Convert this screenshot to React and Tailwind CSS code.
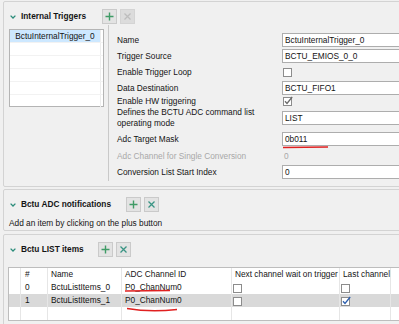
import React from "react";

function Plus() {
  return (
    <svg width="9" height="9" viewBox="0 0 9 9">
      <path d="M4.5 0.5V8.5M0.5 4.5H8.5" stroke="#3f9b66" strokeWidth="1.4" fill="none" />
    </svg>
  );
}
function XIcon({ color }) {
  return (
    <svg width="7" height="7" viewBox="0 0 7 7">
      <path d="M0.5 0.5L6.5 6.5M6.5 0.5L0.5 6.5" stroke={color} strokeWidth="1.3" fill="none" />
    </svg>
  );
}
function Chevron() {
  return (
    <svg width="6" height="4" viewBox="0 0 6 4" className="shrink-0">
      <path d="M0.6 0.6L3 3L5.4 0.6" stroke="#2b8c7a" strokeWidth="1.3" fill="none" />
    </svg>
  );
}
function Buttons({ xDisabled }) {
  return (
    <div className="flex gap-[3px]">
      <span className="w-[15px] h-[15px] flex items-center justify-center bg-[#e3e3e3] border border-[#cacaca]">
        <Plus />
      </span>
      {xDisabled ? (
        <span className="w-[15px] h-[15px] flex items-center justify-center bg-[#dcdcdc] border border-[#d4d4d4]">
          <XIcon color="#bdbdbd" />
        </span>
      ) : (
        <span className="w-[15px] h-[15px] flex items-center justify-center bg-[#e3e3e3] border border-[#cacaca]">
          <XIcon color="#3a9484" />
        </span>
      )}
    </div>
  );
}
function Header({ title, w, xDisabled }) {
  return (
    <div className="flex items-center h-[15px]">
      <span className="ml-[6px] mr-[5px] flex items-center">
        <Chevron />
      </span>
      <span className={`font-bold text-[#141414] whitespace-nowrap ${w}`}>{title}</span>
      <Buttons xDisabled={xDisabled} />
    </div>
  );
}
function Box({ checked, tick = "#2d5fae" }) {
  return (
    <svg width="10" height="10" viewBox="0 0 10 10" className="shrink-0">
      <rect x="0.5" y="1.5" width="8" height="8" fill="#fff" stroke="#8c8c8c" />
      {checked && <path d="M2 5.2L4 7.4L9.2 1" stroke={tick} strokeWidth="1.3" fill="none" />}
    </svg>
  );
}
function Input({ children }) {
  return (
    <div className="h-[14px] w-[140px] bg-white border border-[#adadad] flex items-center pl-[2px] text-[#141414] whitespace-nowrap">
      {children}
    </div>
  );
}
function Row({ h, label, gray, children }) {
  return (
    <div className={`flex items-center ${h}`}>
      <div className={`w-[165px] shrink-0 whitespace-nowrap ${gray ? "text-[#a8a8a8]" : "text-[#141414]"}`}>{label}</div>
      <div className="flex items-center">{children}</div>
    </div>
  );
}

export default function App() {
  const cols = "grid grid-cols-[12px_27px_74px_110px_108px_51px_1fr]";
  const cell = "border-r border-[#e6e6e6] h-[13px] flex items-center whitespace-nowrap";
  return (
    <div className="relative w-[399px] h-[324px] overflow-hidden bg-[#f0f0f0] font-['Liberation_Sans',Arial,sans-serif] text-[8.3px] leading-[11px] text-[#141414]">
      {/* Panel 1 */}
      <div className="mt-[1px] ml-[3px] h-[186px] w-[420px] border border-[#d3d3d3] rounded-[2px] bg-[#f0f0f0] pt-[7px]">
        <Header title="Internal Triggers" w="w-[81px]" xDisabled />
        <div className="flex mt-[5px]">
          <div className="ml-[5px] w-[101px] h-[78px] bg-white border border-[#b4b4b4] flex flex-col">
            {[0, 1, 2, 3, 4, 5].map((i) => (
              <div key={i} className={`flex h-[13px] shrink-0 ${i < 5 ? "border-b border-[#f2f2f2]" : ""}`}>
                <div className={`w-[90px] flex items-center justify-center whitespace-nowrap ${i === 0 ? "bg-[#cde8ff]" : ""}`}>
                  {i === 0 ? "BctuInternalTrigger_0" : ""}
                </div>
                <div className="w-px bg-[#ededed]" />
              </div>
            ))}
          </div>
          <div className="ml-[4px] -mt-[4px] w-px h-[156px] bg-[#c9c9c9]" />
          <div className="ml-[8px] pt-[3px] flex flex-col">
            <Row h="h-[16px]" label="Name">
              <Input>BctuInternalTrigger_0</Input>
            </Row>
            <Row h="h-[16px]" label="Trigger Source">
              <Input>BCTU_EMIOS_0_0</Input>
            </Row>
            <Row h="h-[16px]" label="Enable Trigger Loop">
              <span className="ml-[1px]"><Box /></span>
            </Row>
            <Row h="h-[16px]" label="Data Destination">
              <Input>BCTU_FIFO1</Input>
            </Row>
            <Row h="h-[10px]" label="Enable HW triggering">
              <span className="ml-[1px]"><Box checked tick="#6a6a6a" /></span>
            </Row>
            <Row
              h="h-[24px]"
              label={
                <span className="block leading-[11px]">
                  Defines the BCTU ADC command list
                  <br />
                  operating mode
                </span>
              }
            >
              <Input>LIST</Input>
            </Row>
            <Row h="h-[18px]" label="Adc Target Mask">
              <Input>0b011</Input>
            </Row>
            <Row h="h-[16px]" label="Adc Channel for Single Conversion" gray>
              <div className="h-[14px] w-[140px] flex items-center pl-[2px] text-[#a8a8a8]">0</div>
            </Row>
            <Row h="h-[16px]" label="Conversion List Start Index">
              <Input>0</Input>
            </Row>
          </div>
        </div>
      </div>

      {/* Panel 2 */}
      <div className="mt-[2px] ml-[3px] h-[42px] w-[420px] border border-[#d3d3d3] rounded-[2px] bg-[#f0f0f0] pt-[7px]">
        <Header title="Bctu ADC notifications" w="w-[105px]" />
        <div className="mt-[6px] ml-[5px] text-[#141414]">Add an item by clicking on the plus button</div>
      </div>

      {/* Panel 3 */}
      <div className="mt-[3px] ml-[3px] h-[100px] w-[420px] border border-[#d3d3d3] rounded-[2px] bg-[#f0f0f0] pt-[7px]">
        <Header title="Bctu LIST items" w="w-[77px]" />
        <div className="mt-[10px] ml-[4px] w-[420px] bg-white border border-[#bdbdbd]">
          <div className={cols}>
            <div className={cell} />
            <div className={`${cell} pl-[4px]`}>#</div>
            <div className={`${cell} pl-[3px]`}>Name</div>
            <div className={`${cell} pl-[3px]`}>ADC Channel ID</div>
            <div className={`${cell} pl-[3px]`}>Next channel wait on trigger</div>
            <div className={`${cell} pl-[3px]`}>Last channel</div>
            <div className={cell} />
          </div>
          <div className={cols}>
            <div className={cell} />
            <div className={`${cell} pl-[4px]`}>0</div>
            <div className={`${cell} pl-[3px]`}>BctuListItems_0</div>
            <div className={`${cell} pl-[3px]`}>P0_ChanNum0</div>
            <div className={`${cell} pl-[1px]`}><Box /></div>
            <div className={`${cell} pl-[1px]`}><Box /></div>
            <div className={cell} />
          </div>
          <div className={`${cols} bg-[#d9d9d9]`}>
            <div className={cell} />
            <div className={`${cell} pl-[4px]`}>1</div>
            <div className={`${cell} pl-[3px]`}>BctuListItems_1</div>
            <div className={`${cell} pl-[3px]`}>P0_ChanNum0</div>
            <div className={`${cell} pl-[1px]`}><Box /></div>
            <div className={`${cell} pl-[1px]`}><Box checked /></div>
            <div className={cell} />
          </div>
          <div className={cols}>
            <div className={`${cell} h-[11px]`} />
            <div className={`${cell} h-[11px]`} />
            <div className={`${cell} h-[11px]`} />
            <div className={`${cell} h-[11px]`} />
            <div className={`${cell} h-[11px]`} />
            <div className={`${cell} h-[11px]`} />
            <div className={`${cell} h-[11px]`} />
          </div>
        </div>
      </div>

      {/* red annotations */}
      <svg className="absolute inset-0 pointer-events-none" width="399" height="324" viewBox="0 0 399 324">
        <path d="M283 147.5L328 147" stroke="#e02020" strokeWidth="1.4" fill="none" />
        <path d="M125 291L170 290.5" stroke="#e02020" strokeWidth="1.4" fill="none" />
        <path d="M127 308.5Q150 312.5 177 309.5" stroke="#e02020" strokeWidth="1.4" fill="none" />
      </svg>
    </div>
  );
}
